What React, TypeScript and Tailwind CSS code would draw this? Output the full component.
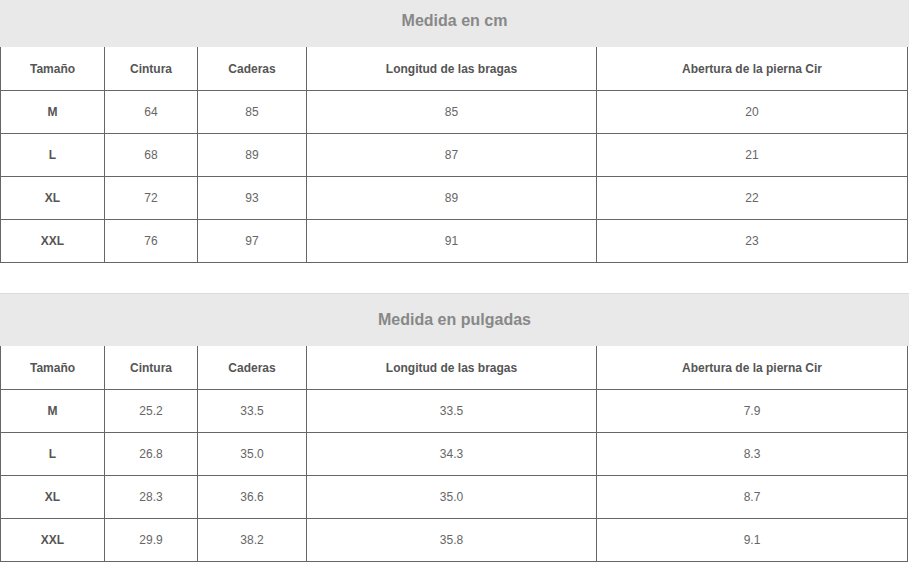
const headers = ["Tamaño", "Cintura", "Caderas", "Longitud de las bragas", "Abertura de la pierna Cir"];

const cmRows = [
  ["M", "64", "85", "85", "20"],
  ["L", "68", "89", "87", "21"],
  ["XL", "72", "93", "89", "22"],
  ["XXL", "76", "97", "91", "23"],
];

const inchRows = [
  ["M", "25.2", "33.5", "33.5", "7.9"],
  ["L", "26.8", "35.0", "34.3", "8.3"],
  ["XL", "28.3", "36.6", "35.0", "8.7"],
  ["XXL", "29.9", "38.2", "35.8", "9.1"],
];

function SizeTable({ rows }: { rows: string[][] }) {
  return (
    <div className="grid grid-cols-[104px_93px_109px_290px_311px] border-l border-[#666] w-[908px]">
      {headers.map((h) => (
        <div
          key={h}
          className="h-[44px] flex items-center justify-center border-r border-b border-[#666] text-[12px] font-bold text-[#555]"
        >
          {h}
        </div>
      ))}
      {rows.map((r) =>
        r.map((v, i) => (
          <div
            key={r[0] + i}
            className={`h-[43px] flex items-center justify-center border-r border-b border-[#666] text-[12px] ${
              i === 0 ? "font-bold text-[#555]" : "text-[#666]"
            }`}
          >
            {v}
          </div>
        ))
      )}
    </div>
  );
}

export default function App() {
  return (
    <div className="w-[909px] h-[563px] bg-white overflow-hidden font-['Liberation_Sans',Arial,sans-serif]">
      <div className="h-[47px] pb-[6px] bg-[#e9e9e9] flex items-center justify-center text-[16px] font-bold text-[#888]">
        Medida en cm
      </div>
      <SizeTable rows={cmRows} />

      <div className="mt-[30px] h-[53px] bg-[#e9e9e9] border-t border-[#dcdcdc] flex items-center justify-center text-[16px] font-bold text-[#888]">
        Medida en pulgadas
      </div>
      <SizeTable rows={inchRows} />
    </div>
  );
}
